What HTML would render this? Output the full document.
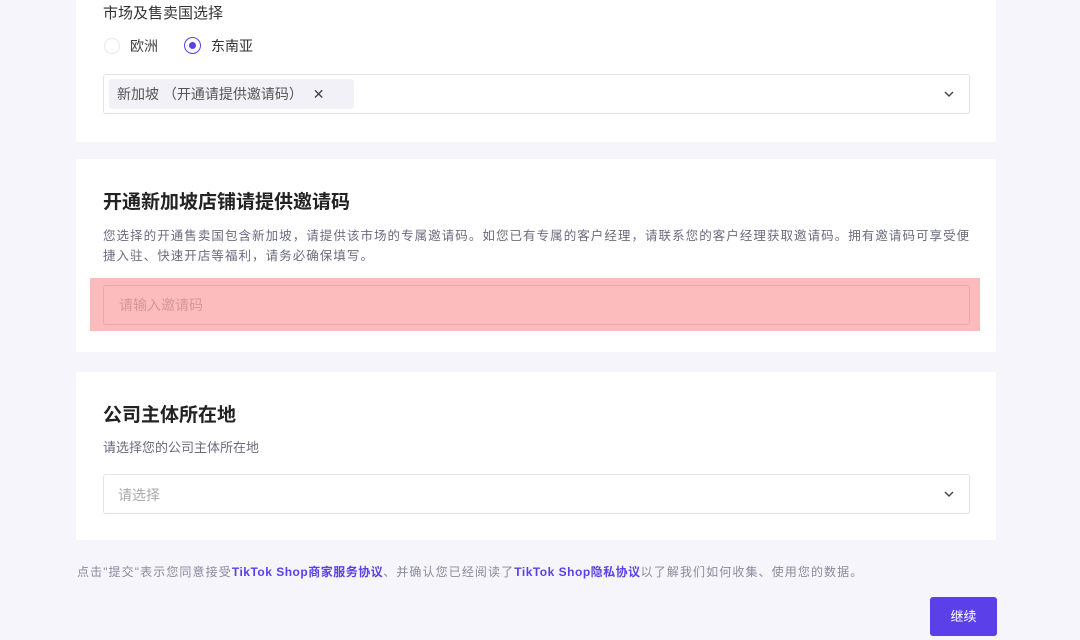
<!DOCTYPE html>
<html><head><meta charset="utf-8"><style>
*{box-sizing:border-box;margin:0;padding:0}
body{width:1080px;height:640px;overflow:hidden;background:#f6f5fb;font-family:"Liberation Sans","Noto Sans CJK SC",sans-serif;position:relative;color:#222}
.card{position:absolute;left:76px;width:920px;background:#fff}
.abs{position:absolute}
.box{position:absolute;left:27px;width:867px;height:40px;border:1px solid #e3e2ea;border-radius:3px;background:#fff}
.chev{position:absolute;right:14px;top:13px}
</style></head><body>
<div class="card" style="top:0;height:142px">
  <div class="abs" style="left:27px;top:2px;font-size:15px;color:#333">市场及售卖国选择</div>
  <div class="abs" style="left:28px;top:38px;width:16px;height:16px;border-radius:50%;border:1px solid #e6e6ec"></div>
  <div class="abs" style="left:54px;top:36px;font-size:14px;color:#444">欧洲</div>
  <div class="abs" style="left:108px;top:37px;width:17px;height:17px;border-radius:50%;border:1.5px solid #5b3fe8"><div style="position:absolute;left:3.5px;top:3.5px;width:7px;height:7px;border-radius:50%;background:#5b3fe8"></div></div>
  <div class="abs" style="left:135px;top:36px;font-size:14px;color:#333">东南亚</div>
  <div class="box" style="top:74px">
    <div class="abs" style="left:5px;top:4px;width:245px;height:30px;background:#f2f1f8;border-radius:3px;font-size:14px;color:#555;line-height:30px;padding-left:8px">新加坡 （开通请提供邀请码） <span style="margin-left:6px;color:#444">✕</span></div>
    <svg class="chev" width="12" height="12" viewBox="0 0 12 12"><path d="M2 4l4 4 4-4" fill="none" stroke="#444" stroke-width="1.4"/></svg>
  </div>
</div>
<div class="card" style="top:159px;height:193px">
  <div class="abs" style="left:27px;top:28px;font-size:19px;font-weight:bold;color:#222">开通新加坡店铺请提供邀请码</div>
  <div class="abs" style="left:27px;top:67px;width:875px;font-size:12.5px;letter-spacing:1.05px;line-height:20px;color:#6b6b80">您选择的开通售卖国包含新加坡，请提供该市场的专属邀请码。如您已有专属的客户经理，请联系您的客户经理获取邀请码。拥有邀请码可享受便捷入驻、快速开店等福利，请务必确保填写。</div>
</div>
<div class="abs" style="left:90px;top:278px;width:890px;height:53px;background:#fcbcbd"></div>
<div class="abs" style="left:103px;top:285px;width:867px;height:40px;border:1px solid #f0a7aa;border-radius:3px;font-size:14px;color:#d89598;line-height:38px;padding-left:15px">请输入邀请码</div>
<div class="card" style="top:372px;height:168px">
  <div class="abs" style="left:27px;top:28px;font-size:19px;font-weight:bold;color:#222">公司主体所在地</div>
  <div class="abs" style="left:27px;top:65px;font-size:13px;color:#6b6b80">请选择您的公司主体所在地</div>
  <div class="box" style="top:102px"><div class="abs" style="left:14px;top:10px;font-size:14px;color:#aaa">请选择</div>
  <svg class="chev" width="12" height="12" viewBox="0 0 12 12"><path d="M2 4l4 4 4-4" fill="none" stroke="#444" stroke-width="1.4"/></svg></div>
</div>
<div class="abs" style="left:77px;top:563px;font-size:12px;letter-spacing:1.1px;color:#8a8a9a">点击"提交"表示您同意接受<b style="color:#5b3fe8;letter-spacing:0.5px">TikTok Shop商家服务协议</b>、并确认您已经阅读了<b style="color:#5b3fe8;letter-spacing:0.5px">TikTok Shop隐私协议</b>以了解我们如何收集、使用您的数据。</div>
<div class="abs" style="left:930px;top:597px;width:67px;height:39px;background:#5b3fe8;border-radius:3px;color:#fff;font-size:13px;text-align:center;line-height:39px">继续</div>
</body></html>
